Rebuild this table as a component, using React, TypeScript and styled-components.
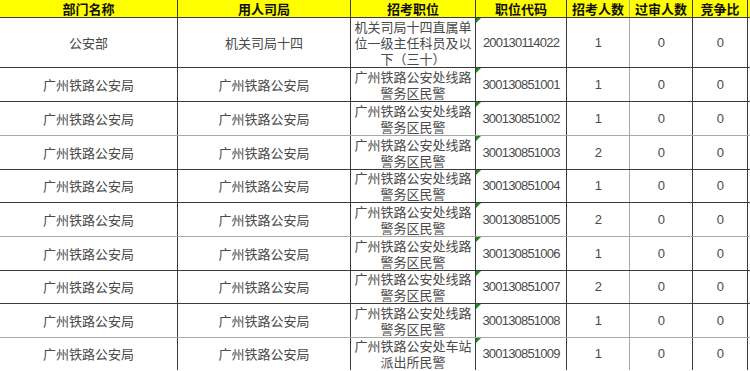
import styled, { createGlobalStyle } from "styled-components";

const GlobalStyle = createGlobalStyle`
  html, body {
    margin: 0;
    padding: 0;
    background: #fff;
  }
  body {
    font-family: "Noto Sans CJK SC", "Noto Sans", sans-serif;
  }
`;

const COLS = "178px 173px 125px 91px 63px 63px 55px";

const Sheet = styled.div`
  width: 750px;
  height: 371px;
  overflow: hidden;
  background: #fff;
`;

const Row = styled.div<{ $h: number; $light?: boolean; $open?: boolean }>`
  display: grid;
  grid-template-columns: ${COLS};
  height: ${(p) => p.$h}px;
  box-sizing: border-box;
  border-bottom: 1px solid ${(p) => (p.$open ? "transparent" : p.$light ? "#a8a8a8" : "#3a3a3a")};
`;

const HeadRow = styled(Row)`
  background: #ffff00;
`;

const Cell = styled.div<{ $soft?: boolean }>`
  display: flex;
  align-items: center;
  justify-content: center;
  text-align: center;
  box-sizing: border-box;
  border-right: 1px solid ${(p) => (p.$soft ? "#a8a8a8" : "#3a3a3a")};
  font-size: 13px;
  line-height: 16px;
  color: #4a4a4a;
`;

const HeadCell = styled(Cell)`
  font-weight: bold;
  color: #111;
  line-height: 17px;
`;

const TextCell = styled(Cell)`
  padding: 0 2px;
  line-height: 16px;
  word-break: break-all;
`;

const NumCell = styled(Cell)`
  font-family: "Liberation Sans", Arial, sans-serif;
  color: #4a4a4a;
  letter-spacing: -0.8px;
`;

const CodeCell = styled(NumCell)`
  position: relative;
  &::before {
    content: "";
    position: absolute;
    top: 0;
    left: 0;
    border-top: 5px solid #1d8a1d;
    border-right: 5px solid transparent;
  }
`;

type Item = {
  dept: string;
  office: string;
  post: string;
  code: string;
  quota: number;
  h: number;
  light?: boolean;
  open?: boolean;
};

const STATION = "广州铁路公安局";
const LINE_POST = "广州铁路公安处线路警务区民警";

const items: Item[] = [
  { dept: "公安部", office: "机关司局十四", post: "机关司局十四直属单位一级主任科员及以下（三十）", code: "200130114022", quota: 1, h: 50 },
  { dept: STATION, office: STATION, post: LINE_POST, code: "300130851001", quota: 1, h: 34 },
  { dept: STATION, office: STATION, post: LINE_POST, code: "300130851002", quota: 1, h: 34, light: true },
  { dept: STATION, office: STATION, post: LINE_POST, code: "300130851003", quota: 2, h: 34 },
  { dept: STATION, office: STATION, post: LINE_POST, code: "300130851004", quota: 1, h: 33 },
  { dept: STATION, office: STATION, post: LINE_POST, code: "300130851005", quota: 2, h: 34, light: true },
  { dept: STATION, office: STATION, post: LINE_POST, code: "300130851006", quota: 1, h: 34 },
  { dept: STATION, office: STATION, post: LINE_POST, code: "300130851007", quota: 2, h: 33 },
  { dept: STATION, office: STATION, post: LINE_POST, code: "300130851008", quota: 1, h: 34, light: true },
  { dept: STATION, office: STATION, post: "广州铁路公安处车站派出所民警", code: "300130851009", quota: 1, h: 33, open: true },
];

export default function App() {
  return (
    <Sheet>
      <GlobalStyle />
      <HeadRow $h={18}>
        <HeadCell>部门名称</HeadCell>
        <HeadCell>用人司局</HeadCell>
        <HeadCell>招考职位</HeadCell>
        <HeadCell>职位代码</HeadCell>
        <HeadCell $soft>招考人数</HeadCell>
        <HeadCell>过审人数</HeadCell>
        <HeadCell>竞争比</HeadCell>
      </HeadRow>
      {items.map((it) => (
        <Row key={it.code} $h={it.h} $light={it.light} $open={it.open}>
          <Cell>{it.dept}</Cell>
          <Cell>{it.office}</Cell>
          <TextCell>{it.post}</TextCell>
          <CodeCell>{it.code}</CodeCell>
          <NumCell $soft>{it.quota}</NumCell>
          <NumCell>0</NumCell>
          <NumCell>0</NumCell>
        </Row>
      ))}
    </Sheet>
  );
}
